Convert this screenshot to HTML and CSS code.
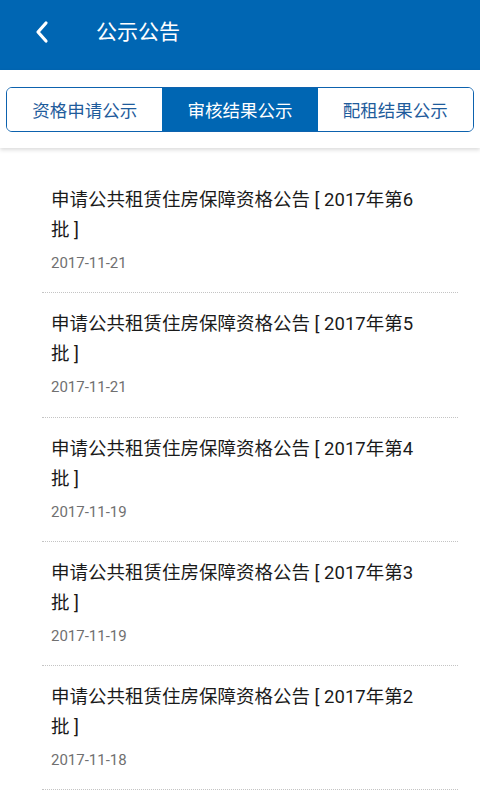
FILE: index.html
```html
<!DOCTYPE html>
<html lang="zh-CN">
<head>
<meta charset="utf-8">
<title>公示公告</title>
<link rel="stylesheet" href="styles.css">
</head>
<body>
<header class="topbar">
  <span class="back">
    <svg width="16" height="24" viewBox="0 0 16 24"><path d="M12 3 L4 12 L12 21" fill="none" stroke="#fff" stroke-width="3.2" stroke-linecap="round" stroke-linejoin="round"/></svg>
  </span>
  <h1 class="title">公示公告</h1>
</header>
<nav class="tabbar">
  <div class="tabs">
    <div class="tab">资格申请公示</div>
    <div class="tab active">审核结果公示</div>
    <div class="tab">配租结果公示</div>
  </div>
</nav>
<main class="list">
  <div class="item">
    <div class="item-title">申请公共租赁住房保障资格公告 [ 2017年第6批 ]</div>
    <div class="item-date">2017-11-21</div>
  </div>
  <div class="item">
    <div class="item-title">申请公共租赁住房保障资格公告 [ 2017年第5批 ]</div>
    <div class="item-date">2017-11-21</div>
  </div>
  <div class="item">
    <div class="item-title">申请公共租赁住房保障资格公告 [ 2017年第4批 ]</div>
    <div class="item-date">2017-11-19</div>
  </div>
  <div class="item">
    <div class="item-title">申请公共租赁住房保障资格公告 [ 2017年第3批 ]</div>
    <div class="item-date">2017-11-19</div>
  </div>
  <div class="item">
    <div class="item-title">申请公共租赁住房保障资格公告 [ 2017年第2批 ]</div>
    <div class="item-date">2017-11-18</div>
  </div>
</main>
</body>
</html>
```
FILE: styles.css
```css
html, body {
  margin: 0;
  padding: 0;
  background: #fff;
  font-family: Roboto, "Noto Sans CJK SC", sans-serif;
  width: 480px;
  height: 800px;
  overflow: hidden;
}
.topbar {
  height: 70px;
  background: #0066b3;
  display: flex;
  align-items: center;
  box-sizing: border-box;
  padding-left: 34px;
  padding-bottom: 6px;
}
.back {
  display: flex;
  width: 16px;
  height: 24px;
}
.title {
  margin: 0 0 0 46px;
  font-size: 21px;
  font-weight: normal;
  color: #fff;
  line-height: 28px;
}
.tabbar {
  background: #fff;
  padding: 17px 6px 16px;
  box-shadow: 0 2px 4px rgba(0,0,0,0.14);
  position: relative;
  z-index: 1;
}
.tabs {
  display: flex;
  height: 45px;
  box-sizing: border-box;
  border: 1.5px solid #0d62ae;
  border-radius: 6px;
  overflow: hidden;
}
.tab {
  flex: 1;
  display: flex;
  align-items: center;
  justify-content: center;
  font-size: 17.5px;
  color: #1f5c9c;
  background: #fff;
}
.tab.active {
  background: #0066b3;
  color: #fff;
}
.list {
  padding: 21px 22px 0 42px;
}
.item {
  padding: 16px 0 19.3px 9px;
  border-bottom: 1px dotted #c4c4c4;
}
.item-title {
  font-size: 18.5px;
  line-height: 30px;
  color: #1a1a1a;
  padding-right: 30px;
}
.item-date {
  margin-top: 8px;
  font-size: 15px;
  line-height: 20px;
  color: #707070;
}
```
